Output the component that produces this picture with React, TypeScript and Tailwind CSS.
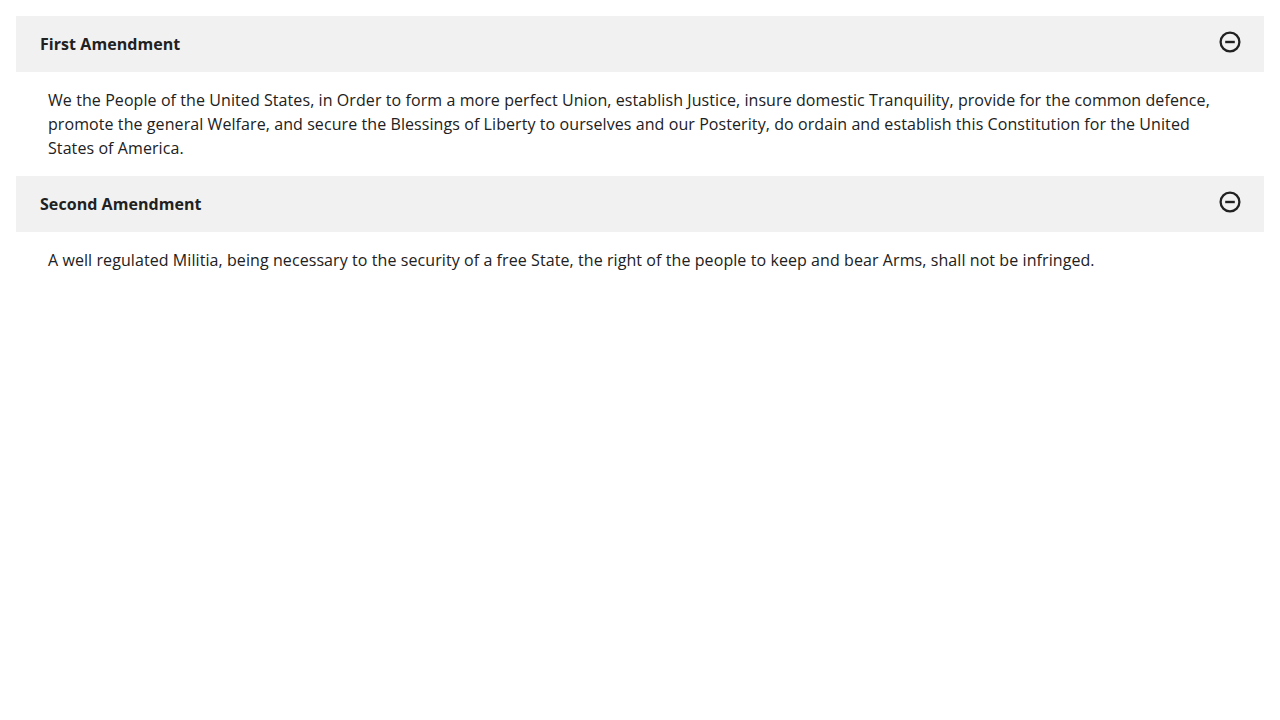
import React from "react";

const items = [
  {
    title: "First Amendment",
    body: "We the People of the United States, in Order to form a more perfect Union, establish Justice, insure domestic Tranquility, provide for the common defence, promote the general Welfare, and secure the Blessings of Liberty to ourselves and our Posterity, do ordain and establish this Constitution for the United States of America.",
  },
  {
    title: "Second Amendment",
    body: "A well regulated Militia, being necessary to the security of a free State, the right of the people to keep and bear Arms, shall not be infringed.",
  },
];

function MinusCircle() {
  return (
    <svg width="22" height="22" viewBox="0 0 22 22" fill="none" className="-mt-[1px] -mr-[1px]">
      <circle cx="11" cy="11" r="9.4" stroke="#212121" strokeWidth="2.3" />
      <line x1="6.2" y1="11" x2="15.8" y2="11" stroke="#212121" strokeWidth="2.4" />
    </svg>
  );
}

export default function App() {
  return (
    <div
      className="bg-white min-h-[720px] p-4 text-[#212121]"
      style={{ fontFamily: '"Open Sans", sans-serif' }}
    >
      {items.map((it) => (
        <div key={it.title}>
          <div className="flex items-start justify-between bg-[#f1f1f1] px-6 py-4">
            <span className="text-base font-bold leading-6 tracking-[0.06px]">{it.title}</span>
            <MinusCircle />
          </div>
          <div className="px-8 py-4 text-base leading-6 tracking-[0.08px]">{it.body}</div>
        </div>
      ))}
    </div>
  );
}
